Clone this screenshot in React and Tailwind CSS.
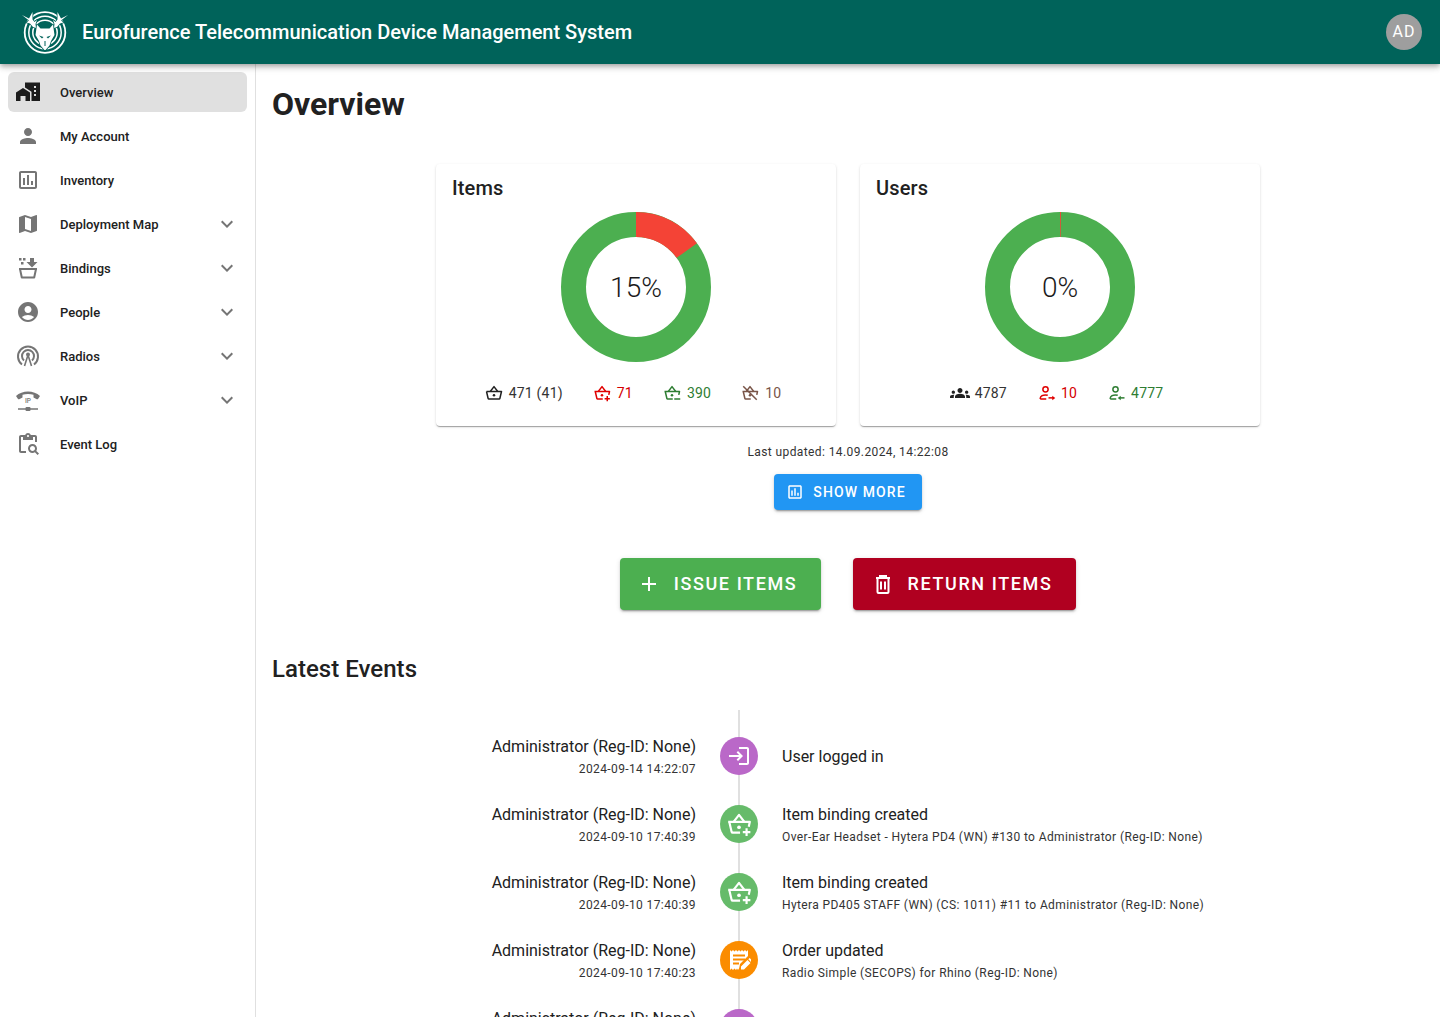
import React from "react";
import {
  MdPerson, MdOutlineAssessment, MdMap, MdAccountCircle, MdExpandMore,
  MdOutlineContentPasteSearch, MdAdd, MdLogin, MdGroups,
} from "react-icons/md";

const Logo = () => (
  <svg width="50" height="48" viewBox="0 0 50 48" className="shrink-0">
    <g fill="none" stroke="#fff" transform="translate(25 24.500)">
      <circle r="20.300" strokeWidth="1.800" />
      <circle r="16.200" strokeWidth="1.500" />
      <circle r="12.200" strokeWidth="1.500" />
    </g>
    <g fill="#fff" stroke="#00635a" strokeWidth="1.500" paintOrder="stroke" strokeLinejoin="round">
      <path d="M2 7 L9 10.500 L12.500 4 L12.500 11.500 L14.500 14 L17 12 L15.500 16 L16 20 L13 19 L10 15.500 L6.500 14.500 L9 12.500 Z" />
      <path d="M48 7 L41 10.500 L37.500 4 L37.500 11.500 L35.500 14 L33 12 L34.500 16 L34 20 L37 19 L40 15.500 L43.500 14.500 L41 12.500 Z" />
      <path d="M17 16.500 L20.500 20.500 L29.500 20.500 L33 16.500 L34.500 27 L31 33 L29.500 37.500 L25.500 42 H24.500 L20.500 37.500 L19 33 L15.500 27 Z" />
    </g>
    <g fill="#00635a">
      <path d="M19 27.500 l4.500 1.500 l-1.500 1.500 z" />
      <path d="M31 27.500 l-4.500 1.500 l1.500 1.500 z" />
      <path d="M24.500 33 v5 h1 v-5 z" />
    </g>
  </svg>
);

const HomeWork = () => (
  <svg width="24" height="24" viewBox="0 0 24 24" fill="#1c1c1c" className="shrink-0">
    <path d="M0 12.500 L7 8 L14 12.500 V21 H9.500 V16 H4.500 V21 H0 Z" />
    <path fillRule="evenodd" d="M9 2.500 H24 V21 H15.500 V11.700 L9 7.500 Z M18 6 v2 h2 V6 Z M18 10 v2 h2 v-2 Z M18 14 v2 h2 v-2 Z" />
  </svg>
);

const Bindings = ({ size = 24 }) => (
  <svg width={size} height={size} viewBox="0 0 24 24" fill="#757575">
    <rect x="3" y="2" width="2.500" height="2.500" /><rect x="7" y="2" width="2.500" height="2.500" /><rect x="5" y="6" width="2.500" height="2.500" />
    <path d="M14 2h4v4h3.500l-5.500 5.500L10.500 6H14z" />
    <path fill="none" stroke="#757575" strokeWidth="2" strokeLinejoin="round" d="M4 13h16l-1.800 8.500H5.800z" />
    <rect x="3" y="12" width="18" height="2" />
  </svg>
);

const Radios = () => (
  <svg width="24" height="24" viewBox="0 0 24 24" fill="none" stroke="#757575" strokeWidth="2">
    <path d="M6 20.500 A10 10 0 1 1 18 20.500" />
    <path d="M8 16.500 A6 6 0 1 1 16 16.500" />
    <circle cx="12" cy="10.500" r="2" fill="#757575" stroke="none" />
    <path d="M12 11 L8.500 22 M12 11 L15.500 22" strokeWidth="1.600" />
  </svg>
);

const Voip = () => (
  <svg width="24" height="24" viewBox="0 0 24 24">
    <path fill="#757575" d="M0 8C3 5 7.500 3.500 12 3.500S21 5 24 8l-2 3c-.3.4-.8.400-1.200.200l-3.300-1.800V6.800C15.800 6.300 13.800 6 12 6s-3.800.3-5.500.8v2.600l-3.300 1.800c-.4.200-.9.200-1.200-.2z" />
    <text x="12" y="15" textAnchor="middle" fontSize="6.500" fontWeight="500" fontFamily="Roboto" fill="#757575">IP</text>
    <path stroke="#757575" strokeWidth="1.500" d="M2 21h20" />
    <rect x="9.500" y="19" width="5" height="4" rx="1" fill="#757575" />
  </svg>
);

const Trash = () => (
  <svg width="24" height="24" viewBox="0 0 24 24" fill="none" stroke="#fff" strokeWidth="2" className="shrink-0">
    <path d="M5 6h14M9 6V4h6v2" />
    <path d="M6.500 6v14a1 1 0 0 0 1 1h9a1 1 0 0 0 1-1V6" />
    <path d="M10 9.500v8M14 9.500v8" />
  </svg>
);

const Basket = ({ color = "currentColor", variant, size = 18 }) => (
  <svg width={size} height={size} viewBox="0 0 24 24" fill="none" stroke={color} strokeWidth="2" strokeLinejoin="round">
    <path d="M7 10 12 3.500 17 10" />
    <path d={variant ? "M2 10h20l-1 4.500M13 20H6.200a1 1 0 0 1-1-.7L3 10" : "M2 10h20l-2.200 9.300a1 1 0 0 1-1 .7H5.200a1 1 0 0 1-1-.7L2 10"} />
    <circle cx="12" cy="15" r="1.700" fill={color} stroke="none" />
    {variant === "plus" && <path d="M19 16v7M15.500 19.500h7" />}
    {variant === "minus" && <path d="M15 20h8" />}
    {variant === "off" && <path d="M3 3l18 18" />}
  </svg>
);

const PersonArrow = ({ color, dir }) => (
  <svg width="18" height="18" viewBox="0 0 24 24" fill="none" stroke={color} strokeWidth="2">
    <circle cx="10" cy="7" r="3.500" />
    <path d="M3 20v-1c0-3 4-4.500 7-4.500 1 0 2 .1 3 .4M3 20h8" />
    {dir === "right" ? <path d="M14 18.500h6" /> : <path d="M16 18.500h6" />}
    {dir === "right"
      ? <path d="M19 15.500v6l4-3z" fill={color} stroke="none" />
      : <path d="M17 15.500v6l-4-3z" fill={color} stroke="none" />}
  </svg>
);

const Receipt = () => (
  <svg width="24" height="24" viewBox="0 0 24 24">
    <path fill="#fff" d="M3 2l1.500 1.500L6 2l1.500 1.500L9 2l1.500 1.500L12 2l1.500 1.500L15 2l1.500 1.500L18 2l1.500 1.500L21 2v9.500l-9 9-1 1.500-1-1.500L9 22l-1.500-1.500L6 22l-1.500-1.500L3 22z" />
    <path stroke="#fb8c00" strokeWidth="2" d="M6 7.500h12M6 11.500h12M6 15.500h6" />
    <path fill="#fb8c00" d="M12 21l1-5 8-8 4 4-8 8z" />
    <path fill="#fff" d="M14 21.500v-3l6.500-6.500 3 3-6.500 6.500zM21.300 11.200l1.300-1.300 2.900 2.900-1.300 1.300z" />
  </svg>
);

const nav = [
  { label: "Overview", icon: <HomeWork />, active: true },
  { label: "My Account", icon: <MdPerson size={24} color="#757575" /> },
  { label: "Inventory", icon: <MdOutlineAssessment size={24} color="#757575" /> },
  { label: "Deployment Map", icon: <MdMap size={24} color="#757575" />, more: true },
  { label: "Bindings", icon: <Bindings />, more: true },
  { label: "People", icon: <MdAccountCircle size={24} color="#757575" />, more: true },
  { label: "Radios", icon: <Radios />, more: true },
  { label: "VoIP", icon: <Voip />, more: true },
  { label: "Event Log", icon: <MdOutlineContentPasteSearch size={24} color="#757575" /> },
];

const Donut = ({ percent, real }) => {
  const a = (real * 2 * Math.PI) / 100;
  const R = 75, r = 50, c = 75;
  const x1 = c + R * Math.sin(a), y1 = c - R * Math.cos(a);
  const x2 = c + r * Math.sin(a), y2 = c - r * Math.cos(a);
  return (
    <div className="relative w-[150px] h-[150px] mx-auto">
      <svg width="150" height="150" viewBox="0 0 150 150">
        <circle cx="75" cy="75" r="62.500" fill="none" stroke="#4caf50" strokeWidth="25" />
        <path d={`M75 0 A75 75 0 0 1 ${x1} ${y1} L${x2} ${y2} A50 50 0 0 0 75 25 Z`} fill="#f44336" />
      </svg>
      <div className="absolute inset-0 pt-[2px] flex items-center justify-center text-[28px] font-light text-[#1a1a1a]">{percent}</div>
    </div>
  );
};

const Stat = ({ icon, text, cls, gap = "gap-[6px]" }) => (
  <div className={`flex items-center text-sm tracking-[0.2px] ${gap} ${cls}`}>
    {icon}
    <span>{text}</span>
  </div>
);

const Card = ({ title, children }) => (
  <div className="w-[400px] h-[262px] bg-white rounded shadow-[0_2px_1px_-1px_rgba(0,0,0,0.2),0_1px_1px_0_rgba(0,0,0,0.14),0_1px_3px_0_rgba(0,0,0,0.12)] p-4 flex flex-col">
    <div className="text-xl font-medium leading-4 h-4 tracking-[0.15px] text-[#212121]">{title}</div>
    {children}
  </div>
);

const Dot = ({ cls, children }) => (
  <div className={`w-[38px] h-[38px] rounded-full flex items-center justify-center relative z-10 ${cls}`}>{children}</div>
);

const basketPlus = <Basket color="#fff" variant="plus" size={26} />;
const events = [
  { time: "2024-09-14 14:22:07", dot: "bg-[#ba68c8]", icon: <MdLogin size={24} color="#fff" />, title: "User logged in" },
  { time: "2024-09-10 17:40:39", dot: "bg-[#66bb6a]", icon: basketPlus, title: "Item binding created", sub: "Over-Ear Headset - Hytera PD4 (WN) #130 to Administrator (Reg-ID: None)" },
  { time: "2024-09-10 17:40:39", dot: "bg-[#66bb6a]", icon: basketPlus, title: "Item binding created", sub: "Hytera PD405 STAFF (WN) (CS: 1011) #11 to Administrator (Reg-ID: None)" },
  { time: "2024-09-10 17:40:23", dot: "bg-[#fb8c00]", icon: <Receipt />, title: "Order updated", sub: "Radio Simple (SECOPS) for Rhino (Reg-ID: None)" },
  { time: "2024-09-10 17:40:23", dot: "bg-[#ba68c8]", icon: <MdLogin size={24} color="#fff" />, title: "User logged in" },
];

const btnShadow = "shadow-[0_3px_1px_-2px_rgba(0,0,0,0.2),0_2px_2px_0_rgba(0,0,0,0.14),0_1px_5px_0_rgba(0,0,0,0.12)]";

export default function App() {
  return (
    <div className="h-screen overflow-hidden flex flex-col bg-white font-['Roboto',sans-serif] text-[#212121]">
      <header className="h-16 shrink-0 bg-[#00635a] text-white flex items-center pl-5 pr-[18px] relative z-20 shadow-[0_2px_4px_-1px_rgba(0,0,0,0.2),0_4px_5px_0_rgba(0,0,0,0.14),0_1px_10px_0_rgba(0,0,0,0.12)]">
        <Logo />
        <div className="ml-[12px] text-xl font-medium">Eurofurence Telecommunication Device Management System</div>
        <div className="ml-auto w-9 h-9 rounded-full bg-[#9e9e9e] flex items-center justify-center text-base tracking-[1px]">AD</div>
      </header>
      <div className="flex-1 flex min-h-0">
        <aside className="w-64 shrink-0 border-r border-[#e0e0e0] px-2 pt-2 flex flex-col gap-1">
          {nav.map((n) => (
            <div key={n.label} className={`h-10 flex items-center pl-2 pr-2 rounded-md ${n.active ? "bg-[#e0e0e0]" : ""}`}>
              <div className="w-6 flex justify-center shrink-0">{n.icon}</div>
              <div className="ml-5 pt-[2px] text-[13px] font-medium flex-1">{n.label}</div>
              {n.more && <MdExpandMore size={24} color="#757575" />}
            </div>
          ))}
        </aside>
        <main className="flex-1 min-w-0 px-4">
          <h1 className="text-[32px] leading-[40px] font-bold mt-5 text-[#212121]">Overview</h1>
          <div className="flex justify-center gap-6 mt-10">
            <Card title="Items">
              <div className="mt-[16px]"><Donut percent="15%" real={15.1} /></div>
              <div className="flex justify-center gap-[30px] mt-[21px] pr-[6px]">
                <Stat icon={<Basket color="#212121" />} text="471 (41)" cls="text-[#333333]" />
                <Stat icon={<Basket color="#e00000" variant="plus" />} text="71" cls="text-[#d50000]" />
                <Stat icon={<Basket color="#2e7d32" variant="minus" />} text="390" cls="text-[#2e7d32]" />
                <Stat icon={<Basket color="#795548" variant="off" />} text="10" cls="text-[#795548]" />
              </div>
            </Card>
            <Card title="Users">
              <div className="mt-[16px]"><Donut percent="0%" real={0.2} /></div>
              <div className="flex justify-center gap-[31px] mt-[21px] pr-[7px]">
                <Stat gap="gap-[5px]" icon={<MdGroups size={20} color="#212121" />} text="4787" cls="text-[#333333]" />
                <Stat gap="gap-[5px]" icon={<PersonArrow color="#e00000" dir="right" />} text="10" cls="text-[#d50000]" />
                <Stat gap="gap-[5px]" icon={<PersonArrow color="#2e7d32" dir="left" />} text="4777" cls="text-[#2e7d32]" />
              </div>
            </Card>
          </div>
          <div className="text-center text-xs tracking-[0.4px] mt-[18px] leading-[16px] text-[#333333]">Last updated: 14.09.2024, 14:22:08</div>
          <div className="flex justify-center mt-[14px]">
            <button className={`h-9 w-[148px] pr-[4px] rounded bg-[#2196f3] text-white text-sm font-medium tracking-[1.1px] flex items-center justify-center gap-[9px] ${btnShadow}`}>
              <MdOutlineAssessment size={18} color="#fff" />SHOW MORE
            </button>
          </div>
          <div className="flex justify-center gap-8 mt-12">
            <button className={`h-[52px] w-[201px] pr-[7px] rounded bg-[#4caf50] text-white text-lg font-medium tracking-[1.6px] flex items-center justify-center gap-[13px] ${btnShadow}`}>
              <MdAdd size={24} color="#fff" />ISSUE ITEMS
            </button>
            <button className={`h-[52px] w-[223px] pr-[6px] rounded bg-[#b00020] text-white text-lg font-medium tracking-[1.6px] flex items-center justify-center gap-[13px] ${btnShadow}`}>
              <Trash />RETURN ITEMS
            </button>
          </div>
          <h2 className="text-2xl leading-8 font-medium mt-[43px] tracking-[0.03px] text-[#212121]">Latest Events</h2>
          <div className="relative mt-[25px] pt-3">
            <div className="absolute left-[466px] top-0 bottom-0 w-[2px] bg-[#e0e0e0]" />
            {events.map((e, i) => (
              <div key={i} className="grid grid-cols-[424px_38px_1fr] gap-x-6 h-[68px] items-center">
                <div className="text-right pt-[2px]">
                  <div className="text-base leading-6">Administrator (Reg-ID: None)</div>
                  <div className="text-xs tracking-[0.39px] leading-5 text-[#333333]">{e.time}</div>
                </div>
                <Dot cls={e.dot}>{e.icon}</Dot>
                <div className="pt-[2px]">
                  <div className="text-base leading-6">{e.title}</div>
                  {e.sub && <div className="text-xs tracking-[0.39px] leading-5 text-[#333333]">{e.sub}</div>}
                </div>
              </div>
            ))}
          </div>
        </main>
      </div>
    </div>
  );
}
